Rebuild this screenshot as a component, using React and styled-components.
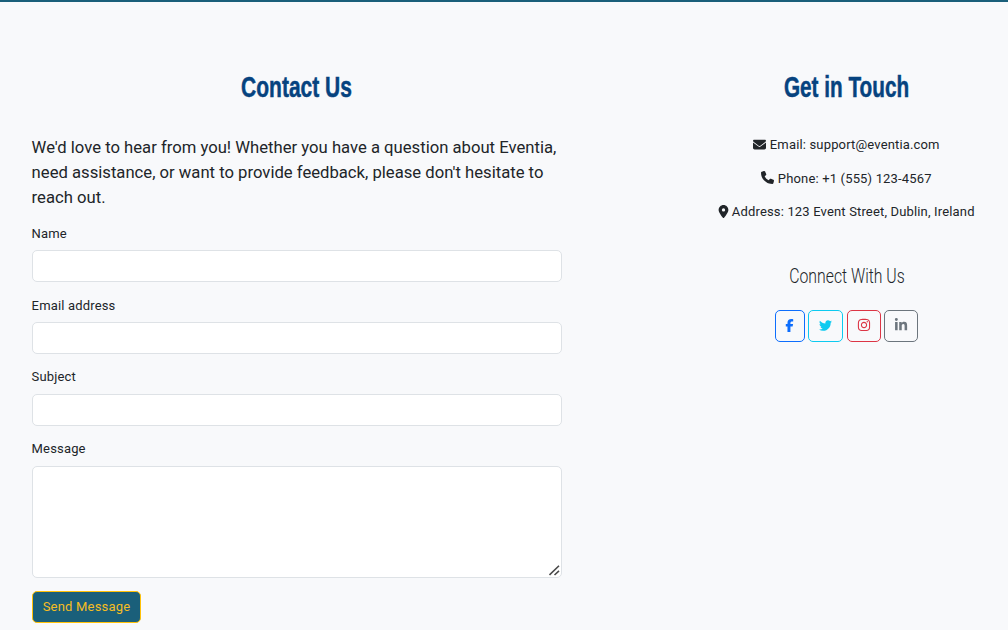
import React from "react";
import styled, { createGlobalStyle } from "styled-components";
import { FaEnvelope, FaPhone, FaLocationDot, FaFacebookF, FaTwitter, FaInstagram, FaLinkedinIn } from "react-icons/fa6";

const GlobalStyle = createGlobalStyle`
  *, *::before, *::after { box-sizing: border-box; }
  body {
    margin: 0;
    overflow: hidden;
    background: #f8f9fb;
    color: #212529;
    font: 400 13px/20px Roboto, sans-serif;
    letter-spacing: 0.16px;
  }
`;

const Page = styled.main`
  height: 630px;
  overflow: hidden;
  border-top: 2px solid #1a5f7a;
  padding: 66px 0 0 32px;
  display: flex;
`;
const FormColumn = styled.section`
  flex: none;
  width: 530px;
`;
const InfoColumn = styled.section`
  flex: none;
  width: 325px;
  margin-left: 122px;
  text-align: center;
`;
const Title = styled.h2`
  margin: 0;
  height: 38px;
  display: flex;
  justify-content: center;
  color: #06437f;
  font: 700 29px/38px "Liberation Sans Narrow", "Liberation Sans", sans-serif;
  letter-spacing: 0;
  white-space: nowrap;
  -webkit-text-stroke: 0.5px #06437f;
`;
const TitleText = styled.span`
  display: block;
  transform: scaleX(${(p) => p.$scale});
`;
const Lead = styled.p`
  margin: 29px 0 13.4px -0.4px;
  font-size: 16.66px;
  line-height: 25px;
  letter-spacing: 0;
  white-space: nowrap;
`;
const Field = styled.div`
  margin-bottom: 12.8px;
`;
const Label = styled.label`
  display: block;
  height: 20px;
  line-height: ${(p) => p.$line ?? 20}px;
  margin: 0 0 7px -0.4px;
`;
const Input = styled.input`
  display: block;
  width: 100%;
  height: 32px;
  border: 1px solid #dee2e6;
  border-radius: 5px;
  background: #fff;
`;
const TextAreaWrap = styled.div`
  position: relative;
`;
const TextArea = styled.textarea`
  display: block;
  width: 100%;
  height: 112px;
  border: 1px solid #dee2e6;
  border-radius: 5px;
  background: #fff;
  resize: none;
`;
const Grip = styled.svg`
  position: absolute;
  right: 2px;
  bottom: 2px;
`;
const Submit = styled.button`
  display: block;
  width: 109px;
  height: 32px;
  padding: 0;
  border: 1px solid #ffc107;
  border-radius: 5px;
  background: #1a5f7a;
  color: #f5bd22;
  font: 400 13px/30px Roboto, sans-serif;
  letter-spacing: 0.2px;
  white-space: nowrap;
`;
const ContactList = styled.address`
  margin-top: 29px;
  font-style: normal;
  display: grid;
  row-gap: 13.5px;
`;
const ContactLine = styled.div`
  display: flex;
  justify-content: center;
  align-items: center;
  gap: ${(p) => p.$gap ?? 3.5}px;
  height: 20px;
  white-space: nowrap;
  margin-left: ${(p) => p.$shift ?? 0}px;
  svg { display: block; flex: none; position: relative; top: -1px; }
`;
const Subtitle = styled.h5`
  margin: 42px 0 0;
  height: 24px;
  display: flex;
  justify-content: center;
  font: 300 20.8px/24px Roboto, sans-serif;
  letter-spacing: 0;
  white-space: nowrap;
`;
const Socials = styled.div`
  margin-top: 22px;
  display: flex;
  justify-content: center;
  gap: 3.5px;
`;
const SocialLink = styled.a`
  width: ${(p) => p.$width}px;
  height: 32px;
  display: flex;
  align-items: center;
  justify-content: center;
  padding-bottom: 2px;
  border: 1px solid ${(p) => p.$color};
  border-radius: 5px;
  color: ${(p) => p.$color};
`;

export default function App() {
  return (
    <>
      <GlobalStyle />
      <Page>
        <FormColumn>
          <Title><TitleText $scale={0.724}>Contact Us</TitleText></Title>
          <Lead>
            We'd love to hear from you! Whether you have a question about Eventia,<br />
            need assistance, or want to provide feedback, please don't hesitate to<br />
            reach out.
          </Lead>
          <Field><Label htmlFor="name" $line={22}>Name</Label><Input id="name" /></Field>
          <Field><Label htmlFor="email" $line={22}>Email address</Label><Input id="email" /></Field>
          <Field><Label htmlFor="subject">Subject</Label><Input id="subject" /></Field>
          <Field>
            <Label htmlFor="message">Message</Label>
            <TextAreaWrap>
              <TextArea id="message" />
              <Grip width="11" height="11" viewBox="0 0 11 11" stroke="#4a4a4a" strokeWidth="1.6">
                <path d="M0.5 10 L10 0.8 M5.5 10 L10 5.8" />
              </Grip>
            </TextAreaWrap>
          </Field>
          <Submit>Send Message</Submit>
        </FormColumn>
        <InfoColumn>
          <Title><TitleText $scale={0.715}>Get in Touch</TitleText></Title>
          <ContactList>
            <ContactLine><FaEnvelope size={13} />Email: support@eventia.com</ContactLine>
            <ContactLine><FaPhone size={13} />Phone: +1 (555) 123-4567</ContactLine>
            <ContactLine $gap={2} $shift={-1.5}><FaLocationDot size={13} />Address: 123 Event Street, Dublin, Ireland</ContactLine>
          </ContactList>
          <Subtitle><TitleText $scale={0.76}>Connect With Us</TitleText></Subtitle>
          <Socials>
            <SocialLink $width={30} $color="#0d6efd"><FaFacebookF size={13} /></SocialLink>
            <SocialLink $width={35} $color="#0dcaf0"><FaTwitter size={13} /></SocialLink>
            <SocialLink $width={34} $color="#dc3545"><FaInstagram size={14} /></SocialLink>
            <SocialLink $width={34} $color="#6c757d"><FaLinkedinIn size={14} /></SocialLink>
          </Socials>
        </InfoColumn>
      </Page>
    </>
  );
}
